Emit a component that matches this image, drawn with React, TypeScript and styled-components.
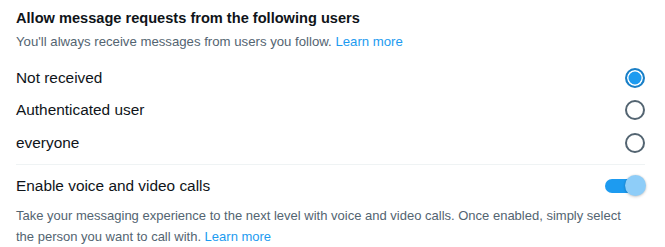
import React, { useState } from "react";
import styled, { createGlobalStyle } from "styled-components";

const Global = createGlobalStyle`
  html, body { margin: 0; padding: 0; background: #ffffff; }
  body { font-family: "Segoe UI", "Liberation Sans", Arial, sans-serif; color: #0f1419; }
`;

const Page = styled.div`
  width: 665px;
  height: 247px;
  box-sizing: border-box;
  padding: 7px 20px 0 16px;
  display: flex;
  flex-direction: column;
  overflow: hidden;
`;

const Title = styled.h2`
  margin: 0;
  font-size: 14.6px;
  font-weight: 700;
  line-height: 22px;
  color: #0f1419;
`;

const Desc = styled.p`
  margin: 0;
  font-size: 13.2px;
  line-height: 20px;
  color: #536471;
  padding-top: 3px;
`;

const Link = styled.a`
  color: #1d9bf0;
  text-decoration: none;
`;

const Options = styled.div`
  display: flex;
  flex-direction: column;
  padding-top: 9.5px;
`;

const OptionRow = styled.label`
  display: flex;
  align-items: center;
  justify-content: space-between;
  height: 32.5px;
  font-size: 15.4px;
  color: #0f1419;
  cursor: pointer;
`;

const Radio = styled.span<{ $checked: boolean }>`
  width: 20px;
  height: 20px;
  box-sizing: border-box;
  border-radius: 50%;
  border: 2px solid ${(p) => (p.$checked ? "#1a7fc6" : "#536471")};
  background: ${(p) => (p.$checked ? "#1d9bf0" : "transparent")};
  box-shadow: ${(p) => (p.$checked ? "inset 0 0 0 1.5px #ffffff" : "none")};
`;

const Divider = styled.hr`
  border: none;
  border-top: 1px solid #eff3f4;
  margin: 4.5px 0 0 0;
`;

const ToggleRow = styled.div`
  display: flex;
  align-items: center;
  justify-content: space-between;
  padding-top: 11px;
  height: 22px;
  font-size: 15.4px;
`;

const Track = styled.span`
  position: relative;
  width: 32px;
  height: 14px;
  border-radius: 7px;
  background: #1d9bf0;
  margin-right: 8px;
`;

const Knob = styled.span`
  position: absolute;
  right: -9px;
  top: -4px;
  width: 21px;
  height: 21px;
  border-radius: 50%;
  background: #8ecdf8;
  box-shadow: 0 0 2px rgba(0, 0, 0, 0.12), 0 1px 3px rgba(0, 0, 0, 0.18);
`;

const Desc2 = styled(Desc)`
  font-size: 13px;
  line-height: 21px;
  padding-top: 8px;
  padding-right: 8px;
`;

const options = ["Not received", "Authenticated user", "everyone"];

export default function App() {
  const [sel, setSel] = useState(0);
  return (
    <>
      <Global />
      <Page>
        <Title>Allow message requests from the following users</Title>
        <Desc>
          You'll always receive messages from users you follow. <Link href="#">Learn more</Link>
        </Desc>
        <Options>
          {options.map((o, i) => (
            <OptionRow key={o} onClick={() => setSel(i)}>
              {o}
              <Radio $checked={sel === i} />
            </OptionRow>
          ))}
        </Options>
        <Divider />
        <ToggleRow>
          Enable voice and video calls
          <Track>
            <Knob />
          </Track>
        </ToggleRow>
        <Desc2>
          Take your messaging experience to the next level with voice and video calls. Once enabled, simply select the person you want to call with. <Link href="#">Learn more</Link>
        </Desc2>
      </Page>
    </>
  );
}
